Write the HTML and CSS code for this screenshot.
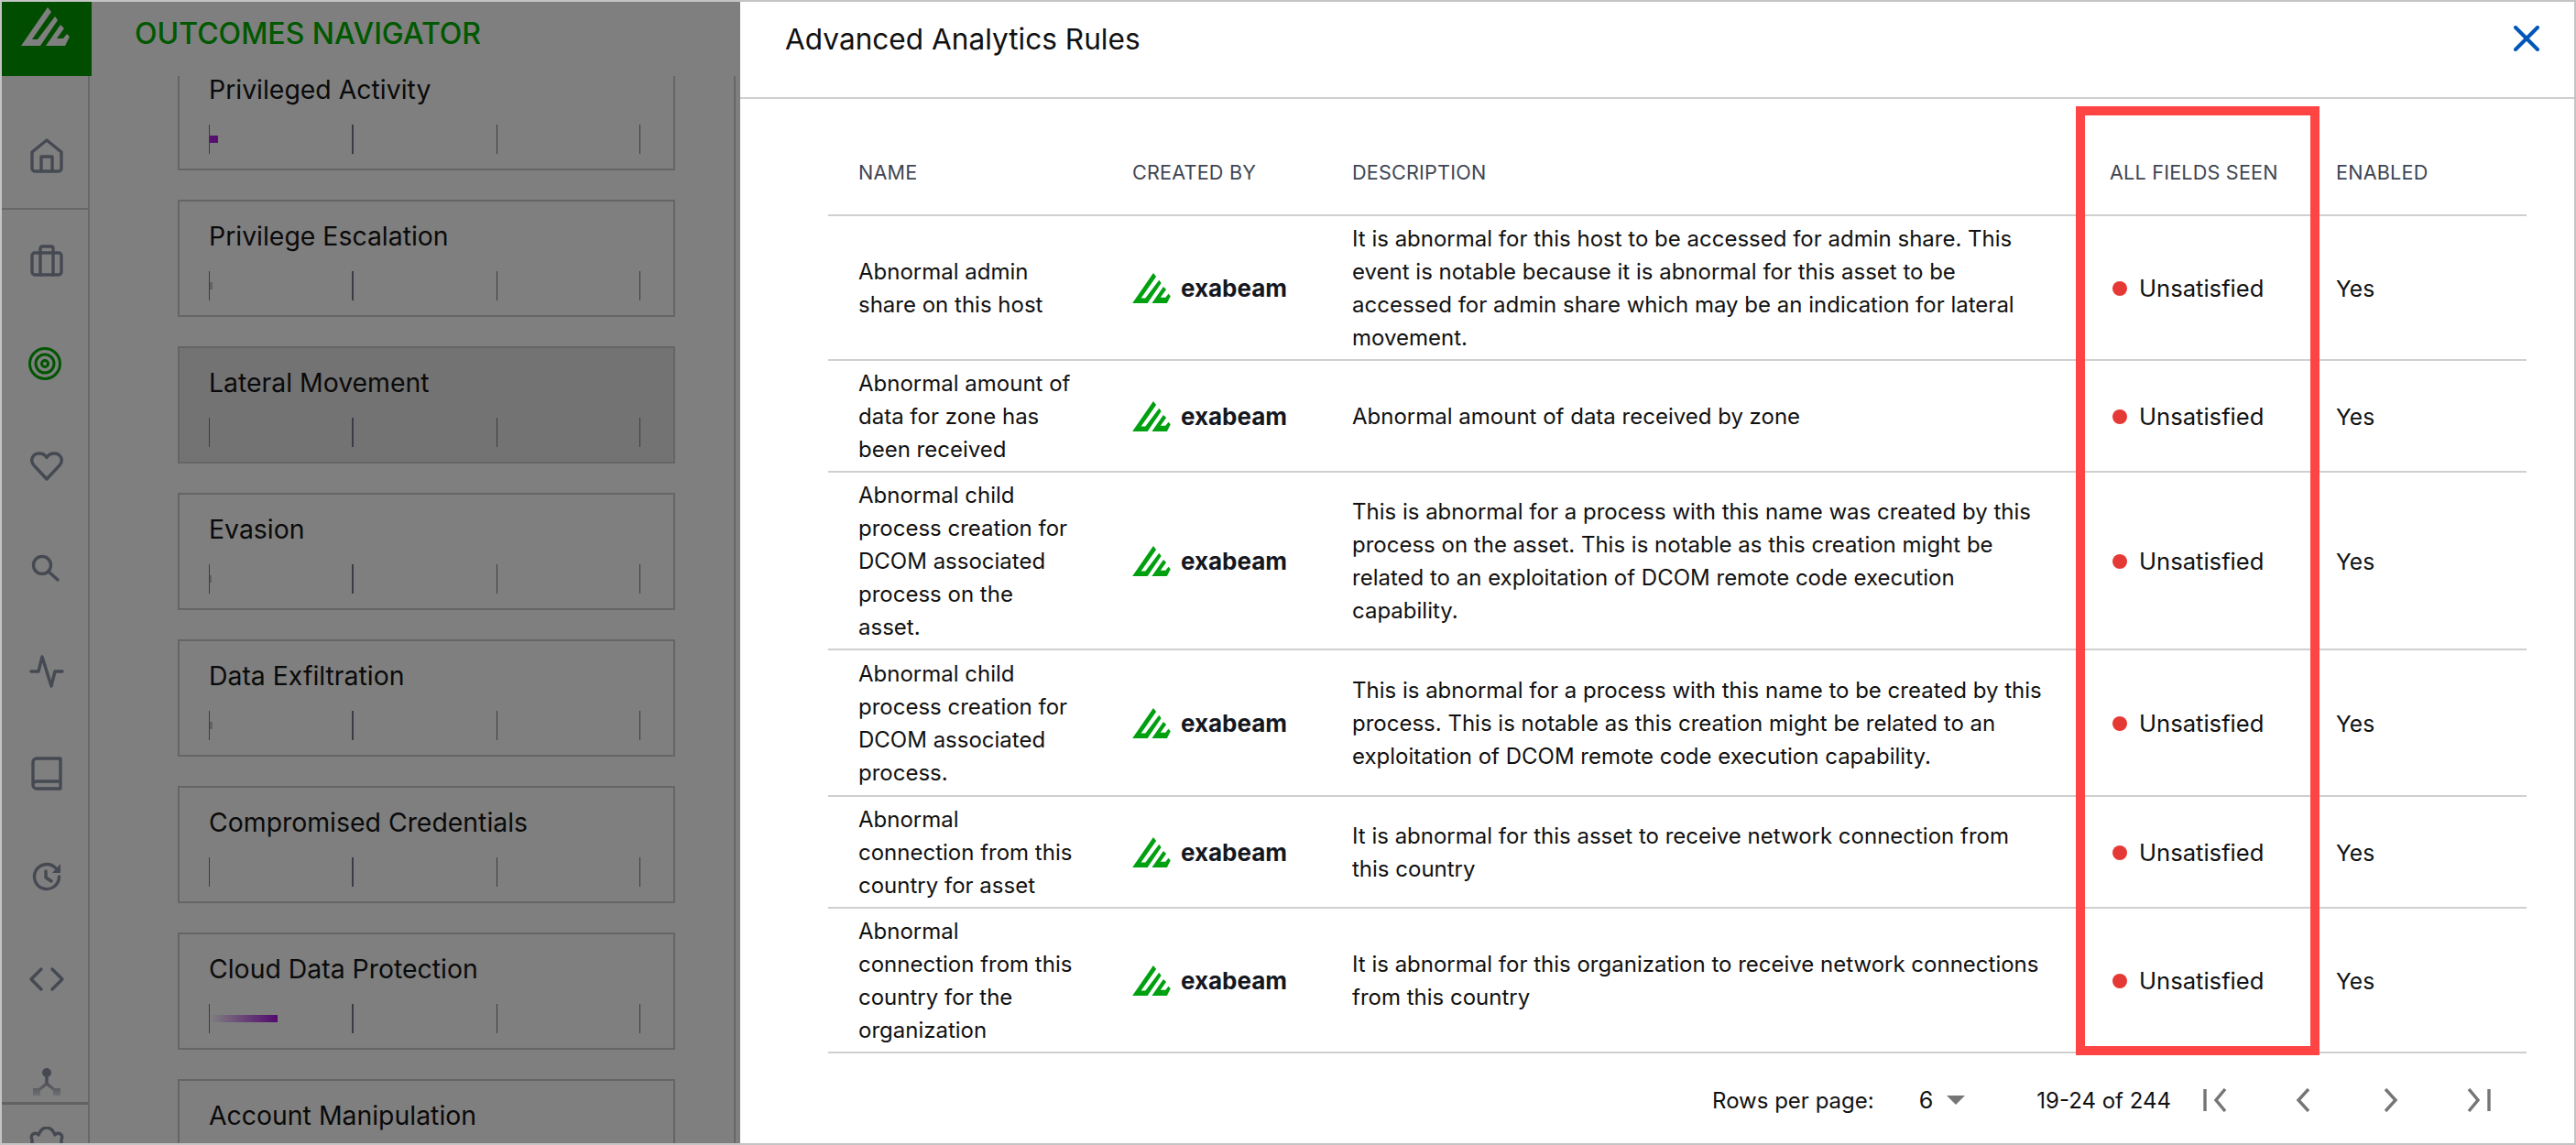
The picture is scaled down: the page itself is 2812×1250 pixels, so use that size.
FILE: index.html
```html
<!DOCTYPE html>
<html lang="en">

<head>
    <meta charset="UTF-8">
    <meta name="viewport" content="width=device-width, initial-scale=1.0">
    <title>Advanced Analytics Rules</title>
    <link rel="stylesheet" href="styles.css">
</head>

<body>

<svg class="defs" width="0" height="0">
    <symbol id="mark" viewBox="0 0 53 42">
        <path d="M0 42 L29 0 L33 5 L12 35 H18 L37 10 L40 14 L21 42 Z M27 42 L43 19 L47 23 L39 34 H46 L50 29 L53 32 L48 42 Z"/>
    </symbol>
</svg>

<div class="frame">

    <!-- page behind the dialog -->
    <div class="app">
        <div class="rail">
            <div class="rail-logo">
                <svg class="rail-mark"><use href="#mark"/></svg>
            </div>
            <div class="rail-home">
                <div class="nav-item">
                    <svg class="nav-icon" viewBox="0 0 40 40"><path d="M20 2 L36 15 V33 a3 3 0 0 1 -3 3 H7 a3 3 0 0 1 -3 -3 V15 Z M14 36 V20 H26 V36"/></svg>
                </div>
            </div>
            <div class="rail-nav">
                <div class="nav-item">
                    <svg class="nav-icon" viewBox="0 0 40 40"><rect x="4" y="11" width="32" height="24" rx="3"/><path d="M13 35 V6 a2 2 0 0 1 2 -2 H25 a2 2 0 0 1 2 2 V35"/></svg>
                </div>
                <div class="nav-item nav-active">
                    <svg class="nav-icon" viewBox="0 0 40 40"><circle cx="18" cy="20" r="16.5"/><circle cx="18" cy="20" r="10"/><circle cx="18" cy="20" r="3.5"/></svg>
                </div>
                <div class="nav-item">
                    <svg class="nav-icon" viewBox="0 0 40 40"><path d="M20 34 L6 19 C1 13 5 6 12 6 C15.5 6 18.5 8 20 10.5 C21.5 8 24.5 6 28 6 C35 6 39 13 34 19 Z"/></svg>
                </div>
                <div class="nav-item">
                    <svg class="nav-icon" viewBox="0 0 40 40"><circle cx="15" cy="16" r="9.5"/><path d="M22 23 L32 32"/></svg>
                </div>
                <div class="nav-item">
                    <svg class="nav-icon" viewBox="0 0 40 40"><path d="M3 20 H11 L15 4 L25 36 L29 20 H37"/></svg>
                </div>
                <div class="nav-item">
                    <svg class="nav-icon" viewBox="0 0 40 40"><path d="M9 3 H35 V36 H9 a4 4 0 0 1 -4 -4 V7 a4 4 0 0 1 4 -4 Z M5 32 a4 4 0 0 1 4 -4 H35"/></svg>
                </div>
                <div class="nav-item">
                    <svg class="nav-icon" viewBox="0 0 40 40"><path d="M29.5 10.5 A13.5 13.5 0 1 0 33.5 20 M19 14 V21 L25 25"/><path class="icon-fill" d="M35 6 V16 H26 Z"/></svg>
                </div>
                <div class="nav-item">
                    <svg class="nav-icon" viewBox="0 0 40 40"><path d="M14 9 L3 20 L14 31 M26 9 L37 20 L26 31"/></svg>
                </div>
                <div class="nav-item">
                    <svg class="nav-icon" viewBox="0 0 40 40"><path d="M20 15 V22 L9 31 M20 22 L31 31"/><circle class="icon-fill" cx="20" cy="10" r="5"/><rect class="icon-fill" x="5" y="27" width="8" height="8"/><rect class="icon-fill" x="27" y="27" width="8" height="8"/></svg>
                </div>
                <div class="nav-fade"></div>
            </div>
            <div class="rail-foot">
                <svg class="nav-icon foot-icon" viewBox="0 0 40 40"><path d="M4 14 a4 4 0 0 1 7 -5 C13 4 16 1 20 1 C24 1 27 4 29 9 a4 4 0 0 1 7 5 L36 30 H4 Z"/></svg>
            </div>
        </div>

        <div class="main">
            <div class="main-head">OUTCOMES NAVIGATOR</div>
            <div class="main-scroll">
                <div class="card-list">
                    <div class="card">
                        <div class="card-title">Privileged Activity</div>
                        <div class="ticks"><i></i><i class="tick-wide"></i><i></i><i></i><span class="bar bar-solid" style="width: 9px"></span></div>
                    </div>
                    <div class="card">
                        <div class="card-title">Privilege Escalation</div>
                        <div class="ticks"><i></i><i class="tick-wide"></i><i></i><i></i><span class="bar bar-faint" style="width: 3px"></span></div>
                    </div>
                    <div class="card card-selected">
                        <div class="card-title">Lateral Movement</div>
                        <div class="ticks"><i></i><i class="tick-wide"></i><i></i><i></i></div>
                    </div>
                    <div class="card">
                        <div class="card-title">Evasion</div>
                        <div class="ticks"><i></i><i class="tick-wide"></i><i></i><i></i><span class="bar bar-faint" style="width: 2px"></span></div>
                    </div>
                    <div class="card">
                        <div class="card-title">Data Exfiltration</div>
                        <div class="ticks"><i></i><i class="tick-wide"></i><i></i><i></i><span class="bar bar-faint" style="width: 3px"></span></div>
                    </div>
                    <div class="card">
                        <div class="card-title">Compromised Credentials</div>
                        <div class="ticks"><i></i><i class="tick-wide"></i><i></i><i></i></div>
                    </div>
                    <div class="card">
                        <div class="card-title">Cloud Data Protection</div>
                        <div class="ticks"><i></i><i class="tick-wide"></i><i></i><i></i><span class="bar bar-fade" style="width: 74px"></span></div>
                    </div>
                    <div class="card">
                        <div class="card-title">Account Manipulation</div>
                        <div class="ticks"><i></i><i class="tick-wide"></i><i></i><i></i></div>
                    </div>
                </div>
            </div>
        </div>

        <div class="scrim"></div>
    </div>

    <!-- dialog -->
    <div class="modal">
        <div class="modal-head">
            <div class="modal-title">Advanced Analytics Rules</div>
            <svg class="modal-close" viewBox="0 0 28 28"><path d="M2 2 L26 26 M26 2 L2 26"/></svg>
        </div>

        <div class="modal-body">
            <table class="rules">
                <colgroup>
                    <col class="col-name">
                    <col class="col-by">
                    <col class="col-desc">
                    <col class="col-seen">
                    <col class="col-enabled">
                </colgroup>
                <thead>
                    <tr>
                        <th>NAME</th>
                        <th>CREATED BY</th>
                        <th>DESCRIPTION</th>
                        <th>ALL FIELDS SEEN</th>
                        <th>ENABLED</th>
                    </tr>
                </thead>
                <tbody>
                    <tr>
                        <td class="cell-name">Abnormal admin share on this host</td>
                        <td><div class="vendor"><svg class="vendor-mark"><use href="#mark"/></svg><span class="vendor-name">exabeam</span></div></td>
                        <td class="cell-desc">It is abnormal for this host to be accessed for admin share. This event is notable because it is abnormal for this asset to be accessed for admin share which may be an indication for lateral movement.</td>
                        <td><div class="status"><span class="status-dot"></span>Unsatisfied</div></td>
                        <td class="cell-flag">Yes</td>
                    </tr>
                    <tr>
                        <td class="cell-name">Abnormal amount of data for zone has been received</td>
                        <td><div class="vendor"><svg class="vendor-mark"><use href="#mark"/></svg><span class="vendor-name">exabeam</span></div></td>
                        <td class="cell-desc">Abnormal amount of data received by zone</td>
                        <td><div class="status"><span class="status-dot"></span>Unsatisfied</div></td>
                        <td class="cell-flag">Yes</td>
                    </tr>
                    <tr>
                        <td class="cell-name">Abnormal child process creation for DCOM associated process on the asset.</td>
                        <td><div class="vendor"><svg class="vendor-mark"><use href="#mark"/></svg><span class="vendor-name">exabeam</span></div></td>
                        <td class="cell-desc">This is abnormal for a process with this name was created by this process on the asset. This is notable as this creation might be related to an exploitation of DCOM remote code execution capability.</td>
                        <td><div class="status"><span class="status-dot"></span>Unsatisfied</div></td>
                        <td class="cell-flag">Yes</td>
                    </tr>
                    <tr class="row-tall">
                        <td class="cell-name">Abnormal child process creation for DCOM associated process.</td>
                        <td><div class="vendor"><svg class="vendor-mark"><use href="#mark"/></svg><span class="vendor-name">exabeam</span></div></td>
                        <td class="cell-desc">This is abnormal for a process with this name to be created by this process. This is notable as this creation might be related to an exploitation of DCOM remote code execution capability.</td>
                        <td><div class="status"><span class="status-dot"></span>Unsatisfied</div></td>
                        <td class="cell-flag">Yes</td>
                    </tr>
                    <tr>
                        <td class="cell-name">Abnormal connection from this country for asset</td>
                        <td><div class="vendor"><svg class="vendor-mark"><use href="#mark"/></svg><span class="vendor-name">exabeam</span></div></td>
                        <td class="cell-desc">It is abnormal for this asset to receive network connection from this country</td>
                        <td><div class="status"><span class="status-dot"></span>Unsatisfied</div></td>
                        <td class="cell-flag">Yes</td>
                    </tr>
                    <tr>
                        <td class="cell-name">Abnormal connection from this country for the organization</td>
                        <td><div class="vendor"><svg class="vendor-mark"><use href="#mark"/></svg><span class="vendor-name">exabeam</span></div></td>
                        <td class="cell-desc">It is abnormal for this organization to receive network connections from this country</td>
                        <td><div class="status"><span class="status-dot"></span>Unsatisfied</div></td>
                        <td class="cell-flag">Yes</td>
                    </tr>
                </tbody>
            </table>

            <div class="pager">
                <span class="pager-label">Rows per page:</span>
                <span class="pager-size">6</span>
                <span class="pager-caret"></span>
                <span class="pager-count">19-24 of 244</span>
                <div class="pager-btn"><svg viewBox="0 0 26 26"><path d="M2 1 V25"/><path d="M24 1 L14 13 L24 25"/></svg></div>
                <div class="pager-btn"><svg viewBox="0 0 26 26"><path d="M19 1 L8 13 L19 25"/></svg></div>
                <div class="pager-btn"><svg viewBox="0 0 26 26"><path d="M7 1 L18 13 L7 25"/></svg></div>
                <div class="pager-btn"><svg viewBox="0 0 26 26"><path d="M2 1 L12 13 L2 25"/><path d="M24 1 V25"/></svg></div>
            </div>
        </div>

        <div class="highlight"></div>
    </div>
</div>

</body>

</html>
```

FILE: styles.css
```css
body {
    margin: 0;
    font-family: Inter, "Liberation Sans", sans-serif;
    color: #111;
    background-color: white;
}

.defs {
    position: absolute;
}

.frame {
    box-sizing: border-box;
    width: 2812px;
    height: 1250px;
    border: 2px solid #c4c4c4;
    display: flex;
    overflow: hidden;
}

/* page behind the dialog */
.app {
    position: relative;
    flex: none;
    width: 806px;
    height: 100%;
    display: flex;
    background-color: white;
}

.scrim {
    position: absolute;
    z-index: 2;
    top: 0;
    right: 0;
    bottom: 0;
    left: 0;
    background-color: rgba(0, 0, 0, 0.5);
}

.rail {
    position: relative;
    z-index: 1;
    flex: none;
    box-sizing: border-box;
    width: 96px;
    height: 100%;
    display: flex;
    flex-direction: column;
    border-right: 2px solid #cfcfcf;
}

.rail-logo {
    flex: none;
    width: 98px;
    height: 81px;
    background-color: #009a00;
    fill: white;
}

.rail-mark {
    display: block;
    width: 53px;
    height: 42px;
    margin: 6px 0 0 21px;
}

.rail-home {
    flex: none;
    padding-top: 32px;
    border-bottom: 2px solid #cfcfcf;
}

.rail-nav {
    position: relative;
    flex: 1;
    min-height: 0;
    overflow: hidden;
}

.nav-item {
    position: relative;
    width: 98px;
    height: 112px;
    display: flex;
    align-items: center;
    justify-content: center;
}

.nav-active::after {
    content: "";
    position: absolute;
    top: 8px;
    right: 0;
    width: 4px;
    height: 96px;
    background-color: #00aa00;
}

.nav-icon {
    width: 40px;
    height: 40px;
    fill: none;
    stroke: #8a92a4;
    stroke-width: 3.4;
    stroke-linejoin: round;
    stroke-linecap: round;
}

.nav-active .nav-icon {
    stroke: #00aa00;
    stroke-width: 3;
}

.icon-fill {
    fill: #8a92a4;
    stroke: none;
}

.nav-fade {
    position: absolute;
    left: 0;
    right: 0;
    bottom: 0;
    height: 24px;
    background: linear-gradient(rgba(255, 255, 255, 0), white);
}

.rail-foot {
    flex: none;
    box-sizing: border-box;
    height: 45px;
    border-top: 3px solid #c4c4c4;
    overflow: hidden;
}

.foot-icon {
    display: block;
    margin: 24px 0 0 29px;
}

.main {
    flex: 1;
    min-width: 0;
    display: flex;
    flex-direction: column;
    height: 100%;
}

.main-head {
    flex: none;
    height: 81px;
    padding: 13px 0 0 49px;
    box-sizing: border-box;
    font-size: 32px;
    line-height: 44px;
    font-weight: 500;
    color: #00b000;
}

.main-scroll {
    flex: 1;
    min-height: 0;
    overflow: hidden;
    margin-right: 5px;
    border-right: 2px solid #cfcfcf;
}

.card-list {
    margin: -25px 0 0 96px;
    width: 543px;
    display: flex;
    flex-direction: column;
    gap: 32px;
}

.card {
    box-sizing: border-box;
    height: 128px;
    flex: none;
    padding: 16px 32px;
    border: 2px solid #cbcbcb;
}

.card-selected {
    background-color: #e6e6e6;
}

.card-title {
    font-size: 28.4px;
    line-height: 44px;
    font-weight: 400;
    color: #141414;
}

.ticks {
    position: relative;
    width: 471px;
    height: 32px;
    margin-top: 16px;
    display: flex;
    justify-content: space-between;
}

.ticks i {
    width: 1px;
    background-color: #747a8a;
}

.ticks .tick-wide {
    width: 2px;
}

.bar {
    position: absolute;
    left: 1px;
    top: 12px;
    height: 8px;
}

.bar-solid {
    background-color: #b020e0;
}

.bar-faint {
    background-color: #c4c4c4;
}

.bar-fade {
    background: linear-gradient(to right, rgba(166, 20, 220, 0), #a614dc);
}

/* dialog */
.modal {
    position: relative;
    flex: 1;
    min-width: 0;
    background-color: white;
}

.modal-head {
    box-sizing: border-box;
    height: 106px;
    padding: 19px 38px 0 49px;
    display: flex;
    justify-content: space-between;
    align-items: flex-start;
    border-bottom: 2px solid #cfcfcf;
}

.modal-title {
    font-size: 31.6px;
    line-height: 44px;
    font-weight: 400;
}

.modal-close {
    width: 28px;
    height: 28px;
    margin-top: 7px;
    fill: none;
    stroke: #0057b8;
    stroke-width: 4;
    stroke-linecap: round;
}

.modal-body {
    padding: 34px 0 0 96px;
}

.rules {
    table-layout: fixed;
    width: 1854px;
    border-collapse: separate;
    border-spacing: 0;
}

.col-name {
    width: 299px;
}

.col-by {
    width: 240px;
}

.col-desc {
    width: 827px;
}

.col-seen {
    width: 247px;
}

.col-enabled {
    width: 241px;
}

.rules th {
    height: 94px;
    box-sizing: border-box;
    padding: 0 0 0 33px;
    border-bottom: 2px solid #cfcfcf;
    text-align: left;
    font-size: 21.6px;
    font-weight: 400;
    color: #3f4654;
    letter-spacing: 0.2px;
}

.rules td {
    padding: 7px 30px 5px 33px;
    border-bottom: 2px solid #cfcfcf;
    font-size: 25.6px;
    line-height: 36px;
    color: #111;
}

.rules .row-tall td {
    padding-top: 8px;
    padding-bottom: 6px;
}

.rules .cell-name {
    font-size: 24px;
}

.rules .cell-desc {
    font-size: 24px;
}

.rules .cell-flag {
    font-size: 24.6px;
}

.vendor {
    display: flex;
    align-items: center;
    margin-top: -2px;
}

.vendor-mark {
    width: 42px;
    height: 33px;
    fill: #00a010;
}

.vendor-name {
    margin-left: 11px;
    font-size: 26px;
    font-weight: 700;
    line-height: 33px;
    color: #15171f;
}

.status {
    display: flex;
    align-items: center;
    margin-left: 3px;
}

.status-dot {
    width: 16px;
    height: 16px;
    border-radius: 50%;
    margin-right: 13px;
    background-color: #e53935;
}

.pager {
    height: 102px;
    width: 1854px;
    box-sizing: border-box;
    padding-right: 4px;
    display: flex;
    align-items: center;
    justify-content: flex-end;
    font-size: 24px;
}

.pager-size {
    margin-left: 49px;
    font-size: 25.2px;
}

.pager-caret {
    width: 0;
    height: 0;
    margin: 0 78px 0 15px;
    border-left: 10px solid transparent;
    border-right: 10px solid transparent;
    border-top: 10px solid #757575;
}

.pager-btn {
    width: 96px;
    height: 26px;
    display: flex;
    justify-content: center;
}

.pager-btn svg {
    width: 26px;
    height: 26px;
    fill: none;
    stroke: #757575;
    stroke-width: 3.4;
}

/* red annotation box drawn over the screenshot */
.highlight {
    position: absolute;
    left: 1458px;
    top: 114px;
    box-sizing: border-box;
    width: 266px;
    height: 1036px;
    border: 10px solid #ff4444;
}
```
